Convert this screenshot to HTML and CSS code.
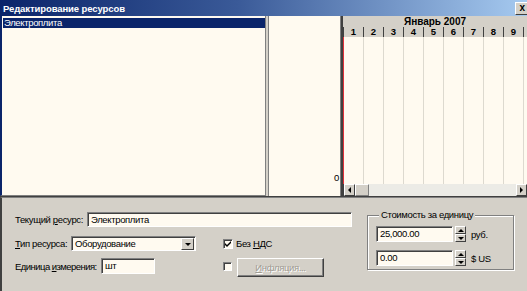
FILE: index.html
```html
<!DOCTYPE html>
<html lang="ru">
<head>
  <meta charset="UTF-8" />
  <title>Редактирование ресурсов</title>
  <link rel="stylesheet" href="styles.css">
</head>
<body>
  <div class="window">
    <div class="titlebar">
      <span class="title">Редактирование ресурсов</span>
      <span class="close_btn">x</span>
    </div>

    <div class="main">
      <div class="res_list">
        <div class="res_item selected">Электроплита</div>
      </div>
      <div class="splitter"></div>
      <div class="axis"><span class="axis_zero">0</span></div>
      <div class="gantt">
        <div class="gantt_month">Январь 2007</div>
        <div class="gantt_days">
          <div class="day">1</div>
          <div class="day">2</div>
          <div class="day">3</div>
          <div class="day">4</div>
          <div class="day">5</div>
          <div class="day">6</div>
          <div class="day">7</div>
          <div class="day">8</div>
          <div class="day">9</div>
          <div class="day"></div>
        </div>
        <div class="gantt_body"></div>
        <div class="hscroll">
          <div class="sb_btn"><span class="arrow_left"></span></div>
          <div class="sb_thumb"></div>
          <div class="sb_track"></div>
          <div class="sb_btn"><span class="arrow_right"></span></div>
        </div>
      </div>
    </div>

    <div class="props">
      <div class="props_form">
        <div class="row row1">
          <label class="lbl lbl1">Текущий <u>р</u>есурс:</label>
          <div class="field field_name">Электроплита</div>
        </div>
        <div class="row row2">
          <label class="lbl lbl2"><u>Т</u>ип ресурса:</label>
          <div class="field combo">
            <span class="combo_text">Оборудование</span>
            <span class="combo_btn"><span class="arrow_down"></span></span>
          </div>
          <div class="check_item check_vat">
            <span class="checkbox">
              <svg width="7" height="7" viewBox="0 0 7 7"><path d="M0 3 L2 5 L6 1 L6 3 L2 7 L0 5 Z" fill="#000"/></svg>
            </span>
            <span>Без <u>Н</u>ДС</span>
          </div>
        </div>
        <div class="row row3">
          <label class="lbl lbl3">Единица <u>и</u>змерения:</label>
          <div class="field field_unit">шт</div>
          <div class="check_item check_infl">
            <span class="checkbox"></span>
          </div>
          <div class="button disabled"><u>И</u>нфляция...</div>
        </div>
      </div>

      <fieldset class="price_group">
        <legend>Стоимость за единицу</legend>
        <div class="price_row">
          <div class="field price_field">25,000.00</div>
          <div class="spinner">
            <span class="spin_half"><span class="arrow_up"></span></span>
            <span class="spin_half"><span class="arrow_down"></span></span>
          </div>
          <span class="currency">руб.</span>
        </div>
        <div class="price_row">
          <div class="field price_field">0.00</div>
          <div class="spinner">
            <span class="spin_half"><span class="arrow_up"></span></span>
            <span class="spin_half"><span class="arrow_down"></span></span>
          </div>
          <span class="currency">$ US</span>
        </div>
      </fieldset>
    </div>
  </div>
</body>
</html>
```

FILE: styles.css
```css
body {
  margin: 0;
  font-family: "Liberation Sans", Arial, sans-serif;
  font-size: 9.5px;
  letter-spacing: -0.35px;
  white-space: nowrap;
  color: #000;
  background-color: #d4d0c8;
}

.window {
  width: 527px;
  height: 291px;
  display: flex;
  flex-direction: column;
  overflow: hidden;
}

/* title bar */
.titlebar {
  height: 16px;
  display: flex;
  align-items: center;
  justify-content: space-between;
  background: linear-gradient(to right, #0a246a, #3a5a98 45%, #a6caf0);
  padding-left: 3px;
}

.title {
  color: #fff;
  font-weight: bold;
  font-size: 9.5px;
  letter-spacing: -0.1px;
}

.close_btn {
  width: 12px;
  height: 11px;
  margin-right: -2px;
  background-color: #d4d0c8;
  border: 1px solid;
  border-color: #fff #404040 #404040 #fff;
  font-weight: bold;
  font-size: 10px;
  line-height: 9px;
  text-align: center;
}

/* main area */
.main {
  height: 180px;
  display: flex;
  border-bottom: 1px solid #404040;
}

.res_list {
  width: 262px;
  background-color: #fffaf0;
  border-left: 2px solid #0a246a;
  border-right: 1px solid #808080;
  border-bottom: 1px solid #808080;
  padding-top: 2px;
  padding-left: 1px;
}

.res_item {
  height: 10px;
  line-height: 10px;
  padding-left: 1px;
}

.res_item.selected {
  background-color: #0a246a;
  color: #fff;
}

.splitter {
  width: 2px;
  background-color: #d4d0c8;
  border-right: 1px solid #808080;
}

.axis {
  width: 70px;
  background-color: #fffaf0;
  border-right: 1px solid #808080;
  display: flex;
  align-items: flex-end;
  justify-content: flex-end;
  padding-bottom: 13px;
  padding-right: 1px;
}

.axis_zero {
  line-height: 10px;
}

.gantt {
  flex: 1;
  display: flex;
  flex-direction: column;
  border-left: 2px solid #404040;
  overflow: hidden;
}

.gantt_month {
  height: 11px;
  line-height: 11px;
  background-color: #d4d0c8;
  font-weight: bold;
  font-size: 10px;
  letter-spacing: 0;
  text-align: center;
}

.gantt_days {
  height: 10px;
  display: flex;
  background-color: #d4d0c8;
  border-left: 1px solid #404040;
}

.day {
  flex: none;
  width: 19px;
  border-right: 1px solid #404040;
  font-weight: bold;
  font-size: 9.5px;
  letter-spacing: 0;
  line-height: 10px;
  text-align: center;
}

.gantt_body {
  flex: 1;
  background-color: #fffaf0;
  background-image: repeating-linear-gradient(to right, transparent 0 19px, #ddd9cf 19px 20px);
  border-left: 1px solid #e0303a;
}

.hscroll {
  height: 12px;
  display: flex;
  background-color: #ecebe6;
  border-left: 1px solid #404040;
}

.sb_btn {
  width: 9px;
  background-color: #d4d0c8;
  border: 1px solid;
  border-color: #fff #404040 #404040 #fff;
  display: flex;
  align-items: center;
  justify-content: center;
}

.sb_thumb {
  width: 12px;
  background-color: #d4d0c8;
  border: 1px solid;
  border-color: #fff #808080 #808080 #fff;
}

.sb_track {
  flex: 1;
}

.arrow_left {
  border-top: 3px solid transparent;
  border-bottom: 3px solid transparent;
  border-right: 3px solid #000;
}

.arrow_right {
  border-top: 3px solid transparent;
  border-bottom: 3px solid transparent;
  border-left: 3px solid #000;
}

.arrow_down {
  border-left: 3px solid transparent;
  border-right: 3px solid transparent;
  border-top: 3px solid #000;
}

.arrow_up {
  border-left: 3px solid transparent;
  border-right: 3px solid transparent;
  border-bottom: 3px solid #000;
}

/* properties panel */
.props {
  flex: 1;
  display: flex;
  border-left: 2px solid #404040;
  border-top: 1px solid #808080;
  padding-left: 13px;
  padding-top: 14px;
}

.props_form {
  width: 338px;
}

.row {
  display: flex;
  align-items: center;
}

.row2 {
  margin-top: 9px;
}

.row3 {
  margin-top: 7px;
  align-items: flex-start;
}

.lbl {
  flex: none;
}

.lbl1 {
  width: 72px;
}

.lbl2 {
  width: 56px;
}

.lbl3 {
  width: 86px;
  margin-top: 3px;
  letter-spacing: -0.55px;
}

.field {
  height: 15px;
  box-sizing: border-box;
  background-color: #fffaf0;
  border: 1px solid;
  border-color: #808080 #fff #fff #808080;
  box-shadow: inset 1px 1px #404040;
  padding-left: 3px;
  line-height: 13px;
}

.field_name {
  width: 265px;
}

.combo {
  width: 125px;
  display: flex;
  justify-content: space-between;
  padding-right: 1px;
}

.combo_btn {
  width: 11px;
  height: 10px;
  margin-top: 1px;
  background-color: #d4d0c8;
  border: 1px solid;
  border-color: #fff #404040 #404040 #fff;
  display: flex;
  align-items: center;
  justify-content: center;
}

.check_item {
  display: flex;
  align-items: center;
  gap: 3px;
}

.check_vat {
  margin-left: 27px;
}

.check_infl {
  margin-left: 68px;
  margin-top: 4px;
}

.checkbox {
  width: 9px;
  height: 9px;
  box-sizing: border-box;
  background-color: #fffaf0;
  border: 1px solid;
  border-color: #808080 #fff #fff #808080;
  box-shadow: inset 1px 1px #404040;
  display: flex;
  align-items: center;
  justify-content: center;
}

.check_vat .checkbox {
  width: 10px;
  height: 10px;
}

.field_unit {
  width: 54px;
  height: 16px;
}

.button {
  width: 87px;
  height: 19px;
  box-sizing: border-box;
  margin-left: 5px;
  border: 1px solid;
  border-color: #fff #404040 #404040 #fff;
  box-shadow: inset -1px -1px #808080;
  text-align: center;
  line-height: 17px;
}

.button.disabled {
  color: #a09c94;
  text-shadow: 1px 1px #fff;
}

/* price group */
.price_group {
  margin: -2px 0 0 14px;
  padding: 6px 0 0 8px;
  width: 147px;
  height: 60px;
  box-sizing: border-box;
  border: 1px solid #808080;
  box-shadow: 1px 1px #fff, inset 1px 1px #fff;
}

.price_group legend {
  padding: 0 2px;
  margin-left: 3px;
  background-color: #d4d0c8;
  line-height: 10px;
}

.price_row {
  display: flex;
  align-items: center;
  height: 16px;
}

.price_row + .price_row {
  margin-top: 8px;
}

.price_field {
  width: 77px;
  height: 16px;
}

.spinner {
  width: 11px;
  height: 16px;
  margin-left: 2px;
  display: flex;
  flex-direction: column;
}

.spin_half {
  flex: 1;
  box-sizing: border-box;
  background-color: #d4d0c8;
  border: 1px solid;
  border-color: #fff #404040 #404040 #fff;
  display: flex;
  align-items: center;
  justify-content: center;
}

.currency {
  margin-left: 5px;
}
```
